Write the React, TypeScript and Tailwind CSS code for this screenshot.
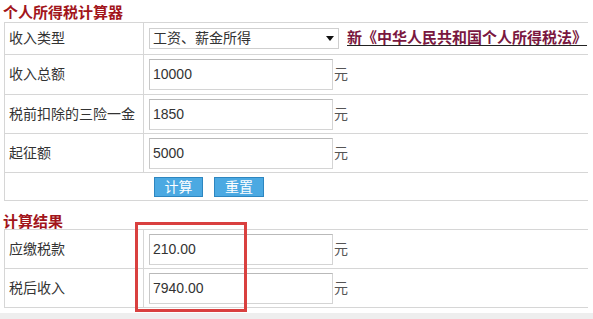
const FONT = { fontFamily: '"Liberation Sans", "Noto Sans CJK SC", sans-serif' }

function Row({ label, h, children }: { label: string; h: string; children?: React.ReactNode }) {
  return (
    <div className={`flex border-b border-[#d6d6d6] ${h}`}>
      <div className="w-[139px] shrink-0 border-r border-[#d6d6d6] flex items-center pl-[4px] text-[14px] text-[#333]">{label}</div>
      <div className="flex-1 flex items-center pl-[5px]">{children}</div>
    </div>
  )
}

function Field({ value }: { value: string }) {
  return (
    <div className="flex items-center">
      <div className="w-[184px] h-[31px] border border-[#d4d4d4] border-t-[#b9b9b9] border-l-[#c8c8c8] bg-white flex items-center pl-[3px] text-[14px] text-[#333]">{value}</div>
      <span className="ml-[1px] text-[14px] text-[#555]">元</span>
    </div>
  )
}

export default function App() {
  return (
    <div className="w-[593px] h-[319px] bg-white overflow-hidden relative" style={FONT}>
      <div className="h-[22px] pl-[3px] pt-[5px] text-[15px] leading-[16px] font-bold text-[#a2151b]">个人所得税计算器</div>

      <div className="ml-[4px] w-[584px] border-l border-t border-[#d6d6d6]">
        <Row label="收入类型" h="h-[32px]">
          <div className="w-[190px] h-[21px] border border-[#cfcfcf] flex items-center pl-[3px] pr-[4px] text-[14px] text-[#333]">
            <span className="flex-1">工资、薪金所得</span>
            <svg width="8" height="5" viewBox="0 0 8 5"><path d="M0 0h8L4 5z" fill="#111" /></svg>
          </div>
          <span className="ml-[2px] pl-[6px] text-[15px] font-bold text-[#7a1740] underline decoration-[#222] underline-offset-[2px]">
            新《中华人民共和国个人所得税法》
          </span>
        </Row>
        <Row label="收入总额" h="h-[40px]"><Field value="10000" /></Row>
        <Row label="税前扣除的三险一金" h="h-[39px]"><Field value="1850" /></Row>
        <Row label="起征额" h="h-[39px]"><Field value="5000" /></Row>
        <div className="flex h-[28px] border-b border-[#d6d6d6]">
          <div className="w-[149px] shrink-0" />
          <div className="flex items-center gap-[11px]">
            <button className="w-[49px] h-[20px] bg-[#4ba9e2] border border-[#2d86c0] text-white text-[14px] leading-none">计算</button>
            <button className="w-[50px] h-[20px] bg-[#4ba9e2] border border-[#2d86c0] text-white text-[14px] leading-none">重置</button>
          </div>
        </div>
      </div>

      <div className="h-[28px] pl-[3px] pt-[13px] text-[15px] leading-[15px] font-bold text-[#a2151b]">计算结果</div>

      <div className="ml-[4px] w-[584px] border-l border-t border-[#d6d6d6]">
        <Row label="应缴税款" h="h-[39px]"><Field value="210.00" /></Row>
        <Row label="税后收入" h="h-[39px]"><Field value="7940.00" /></Row>
      </div>

      <div className="absolute left-0 right-0 bottom-0 h-[6px] bg-[#eeeeee]" />
      <div className="absolute left-[135px] top-[222px] w-[112px] h-[90px] border-[3px] border-[#d9403f]" />
    </div>
  )
}
